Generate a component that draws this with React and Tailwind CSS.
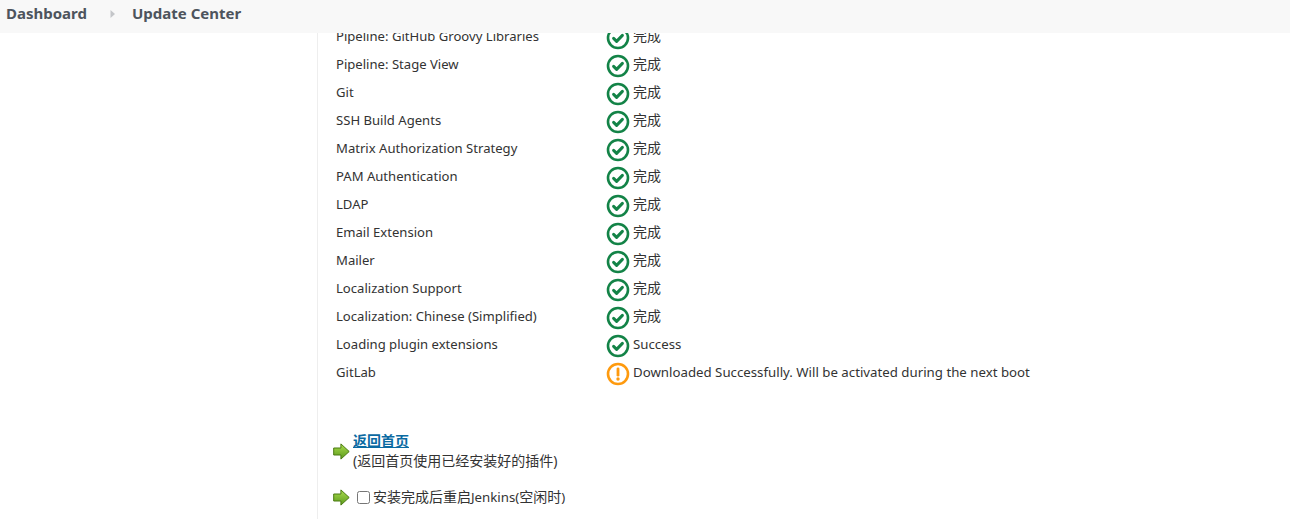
const FONT = "font-['Noto_Sans','Noto_Sans_CJK_SC',sans-serif]";

const rows = [
  ["Pipeline: GitHub Groovy Libraries", "完成"],
  ["Pipeline: Stage View", "完成"],
  ["Git", "完成"],
  ["SSH Build Agents", "完成"],
  ["Matrix Authorization Strategy", "完成"],
  ["PAM Authentication", "完成"],
  ["LDAP", "完成"],
  ["Email Extension", "完成"],
  ["Mailer", "完成"],
  ["Localization Support", "完成"],
  ["Localization: Chinese (Simplified)", "完成"],
  ["Loading plugin extensions", "Success"],
  ["GitLab", "Downloaded Successfully. Will be activated during the next boot", true],
];

function Check() {
  return (
    <svg width="24" height="24" viewBox="0 0 24 24" fill="none" className="shrink-0">
      <circle cx="12" cy="12" r="10" stroke="#138347" strokeWidth="2.6" />
      <path d="M7.6 12.4l3 3 5.8-6" stroke="#138347" strokeWidth="3" strokeLinecap="round" strokeLinejoin="round" />
    </svg>
  );
}

function Warn() {
  return (
    <svg width="24" height="24" viewBox="0 0 24 24" fill="none" className="shrink-0">
      <circle cx="12" cy="12" r="10" stroke="#fe9a0e" strokeWidth="2.6" />
      <path d="M12 6.8v6.4" stroke="#fe9a0e" strokeWidth="2.8" strokeLinecap="round" />
      <circle cx="12" cy="17" r="1.7" fill="#fe9a0e" />
    </svg>
  );
}

function Arrow({ id }) {
  return (
    <svg width="17" height="17" viewBox="0 0 17 17" className="shrink-0">
      <defs>
        <linearGradient id={id} x1="0" y1="0" x2="0" y2="1">
          <stop offset="0" stopColor="#a9dc4c" />
          <stop offset="1" stopColor="#5c9a1c" />
        </linearGradient>
      </defs>
      <path d="M0.7 5h7.2V0.9l8.3 7.6-8.3 7.6V12H0.7z" fill={`url(#${id})`} stroke="#4a7a12" strokeWidth="1" />
    </svg>
  );
}

export default function App() {
  return (
    <div className={`${FONT} h-[519px] w-[1290px] overflow-hidden bg-white text-[13.25px] text-[#333]`}>
      <header className="relative z-10 flex h-[33px] items-center bg-[#f8f8f8] pb-[6px] pl-[6px] text-[15px] font-bold text-[#4d545d]">
        <span>Dashboard</span>
        <svg width="6" height="10" viewBox="0 0 6 10" className="ml-[23px] mr-[16px]">
          <path d="M0.5 1l4.5 4-4.5 4z" fill="#c4c6c9" />
        </svg>
        <span>Update Center</span>
      </header>
      <div className="flex h-[486px]">
        <aside className="w-[318px] shrink-0 border-r border-[#eeeeee]" />
        <main className="-mt-[9px] pl-[18px]">
          <div className="flex flex-col">
            {rows.map(([name, status, warn]) => (
              <div key={name} className="flex h-[28px] items-center">
                <div className="w-[270px] shrink-0 -translate-y-[1px] text-[13.1px]">{name}</div>
                <div className="flex items-center">
                  {warn ? <Warn /> : <Check />}
                  <span className={`ml-[3px] ${status === "完成" ? "-translate-y-[3px] text-[14px]" : "-translate-y-[1px]"}`}>{status}</span>
                </div>
              </div>
            ))}
          </div>
          <div className="mt-[43px] flex items-center text-[14px]">
            <div className="-ml-[3px] mr-[3px]"><Arrow id="a1" /></div>
            <div className="leading-[20px]">
              <a className="font-bold text-[#0b6aa2] underline" href="#top">返回首页</a>
              <div>(返回首页使用已经安装好的插件)</div>
            </div>
          </div>
          <div className="mt-[16px] flex items-center text-[14px] leading-[20px]">
            <div className="-ml-[3px] mr-[7px]"><Arrow id="a2" /></div>
            <input type="checkbox" className="mr-[3px] h-[13px] w-[13px]" />
            <span>安装完成后重启<span className="text-[13.25px]">Jenkins(</span>空闲时<span className="text-[13.25px]">)</span></span>
          </div>
        </main>
      </div>
    </div>
  );
}
